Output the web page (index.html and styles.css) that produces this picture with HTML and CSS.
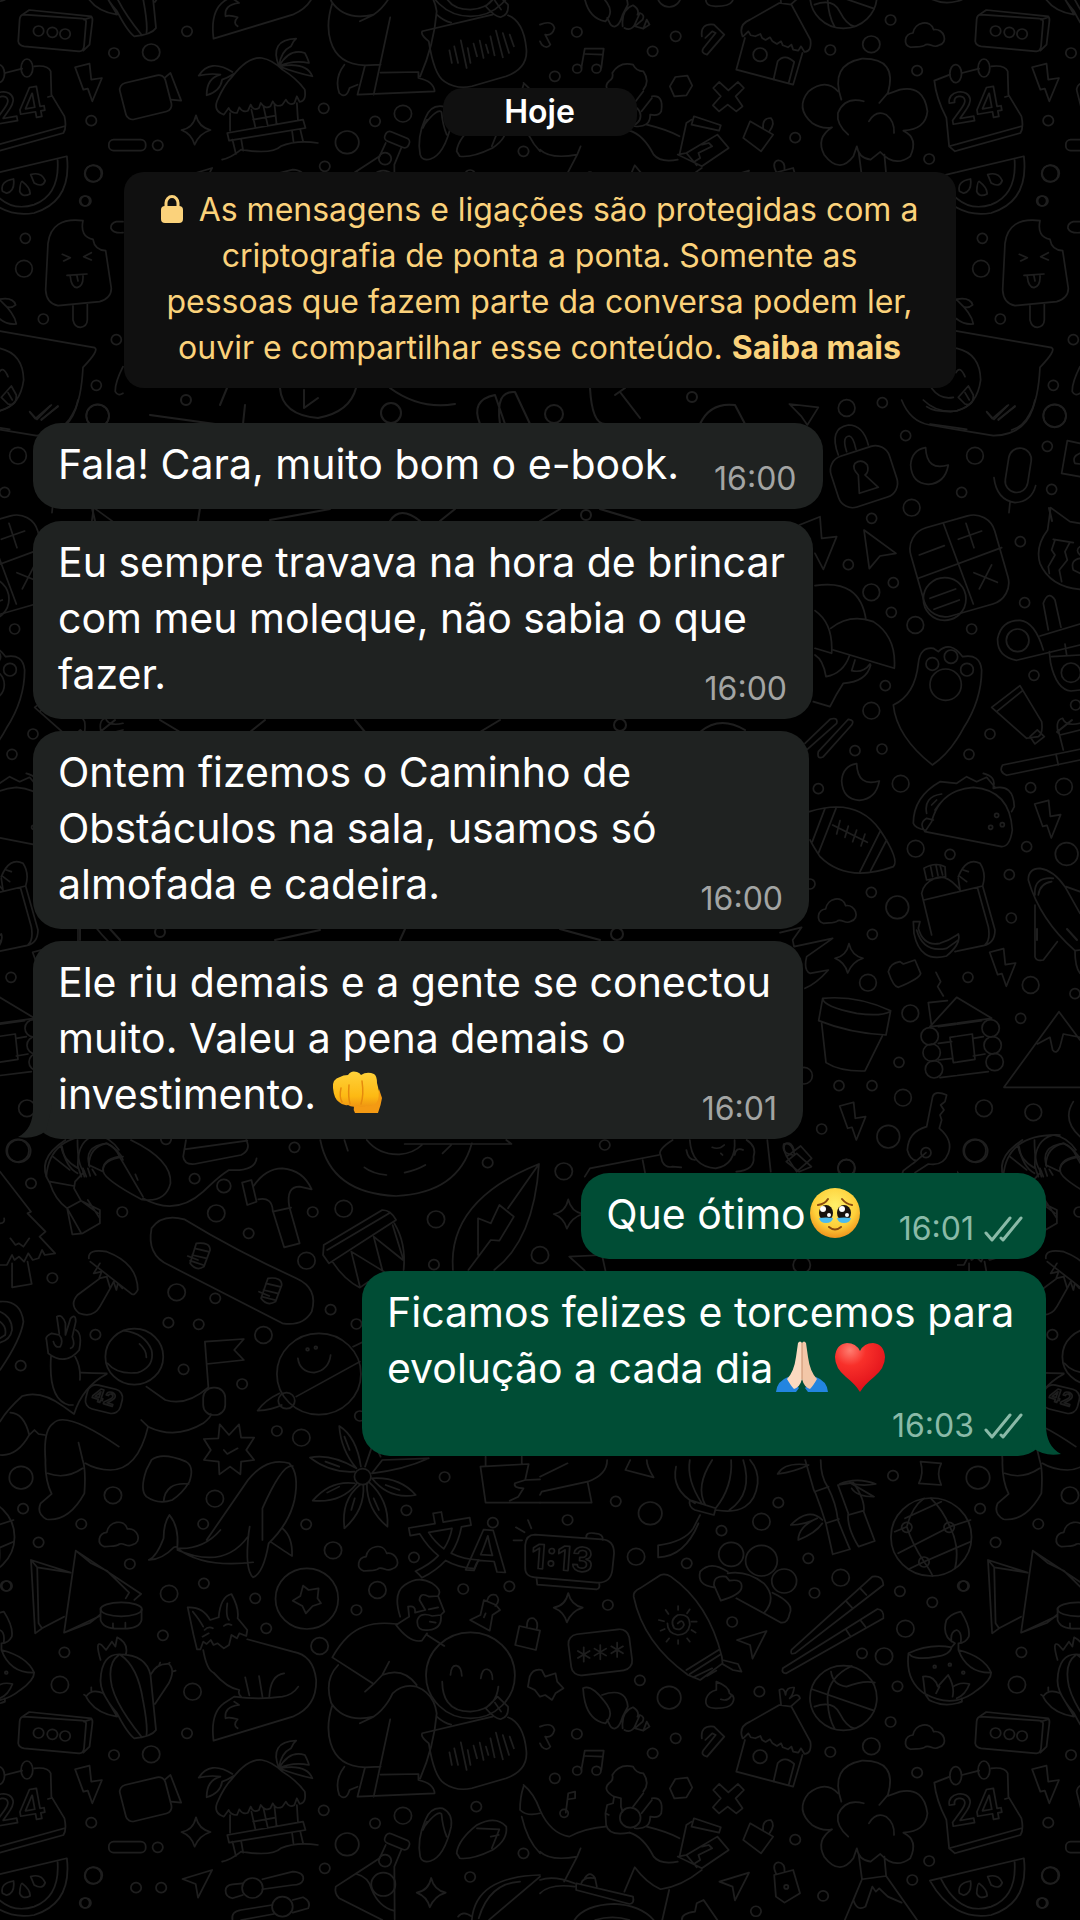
FILE: index.html
```html
<!DOCTYPE html>
<html lang="pt-BR">
<head>
<meta charset="utf-8">
<meta name="viewport" content="width=device-width, initial-scale=1">
<title>Conversa</title>
<link rel="stylesheet" href="styles.css">
</head>
<body>
<svg class="wallpaper" aria-hidden="true">
  <defs>
    <circle id="s" r="15"/>
    <circle id="m" r="25"/>
    <circle id="l" r="34"/>
    <path id="cloud" d="M-42 38C-65 30-60-2-35-5C-30-38 15-48 25-15C55-20 70 25 40 32C25 42 15 25 2 30C-10 40-25 35-42 38Z"/>
    <path id="bolt" d="M-39-45L3-56L8-8L39-13L11 57L-2 19L-15 22Z"/>
    <path id="spark" d="M0-44Q8-8 42 0Q10 10-4 44Q-12 12-42 0Q-8-6 0-44Z"/>
    <path id="arrow" d="M-44-10L42-37L1 46L-6 5Z"/>
    <g id="doodles">
      <!-- lower left -->
      <g transform="translate(0 1520) scale(.3444 .3333)">
        <use href="#s" x="236" y="12"/><use href="#s" x="590" y="12"/><use href="#s" x="889" y="13"/><use href="#s" x="1431" y="8"/><use href="#s" x="112" y="67"/><use href="#s" x="377" y="132"/><use href="#s" x="20" y="198"/><use href="#s" x="592" y="190"/><use href="#s" x="741" y="235"/><use href="#s" x="773" y="325"/><use href="#s" x="473" y="346"/><use href="#s" x="187" y="397"/><use href="#s" x="1202" y="112"/><use href="#s" x="1345" y="207"/><use href="#s" x="1479" y="199"/><use href="#s" x="1035" y="270"/><use href="#s" x="331" y="705"/><use href="#s" x="543" y="640"/><use href="#s" x="265" y="908"/><use href="#s" x="458" y="982"/><use href="#s" x="395" y="1103"/><use href="#s" x="468" y="1103"/><use href="#s" x="249" y="1149"/><use href="#s" x="940" y="871"/><use href="#s" x="1089" y="910"/><use href="#s" x="1383" y="860"/><use href="#s" x="943" y="1045"/><use href="#s" x="1365" y="1071"/><use href="#s" x="1520" y="1000"/>
        <use href="#m" x="491" y="221"/><use href="#m" x="967" y="91"/><use href="#m" x="1096" y="210"/><use href="#m" x="928" y="378"/><use href="#m" x="559" y="515"/><use href="#m" x="174" y="494"/><use href="#m" x="439" y="703"/><use href="#m" x="1170" y="887"/><use href="#m" x="272" y="1066"/><use href="#l" x="1008" y="973"/>
        <use href="#cloud" x="345" y="42"/><use href="#cloud" x="1098" y="115"/><use href="#bolt" x="257" y="793"/><use href="#spark" x="569" y="936"/><use href="#spark" x="1252" y="1118"/><use href="#arrow" x="574" y="1087"/>
        <path d="M205 158L108 142L112 310L122 325L186 290M205 158L90 120L102 340L122 325M90 120L108 142M220 92L186 338L262 308L290 285M220 92L410 222L390 240M220 92L265 130L310 152L375 218L365 235M186 338L290 288"/>
        <ellipse cx="352" cy="268" rx="60" ry="21"/><path d="M292 265V300Q300 328 350 326Q405 328 411 300V268M328 310V326M364 308V326"/>
        <path d="M292 420Q275 360 295 375L308 390L325 365L335 380L340 352Q375 370 365 405M292 480Q295 400 350 403Q425 405 437 465L453 630Q440 650 390 655Q370 640 340 580Q290 520 292 480ZM345 405Q310 430 325 500Q340 560 412 652M350 405Q400 440 415 540Q430 620 425 648M438 463Q455 430 490 432Q510 450 490 490L450 552M462 436L465 428M487 432L493 428M500 455L510 452M250 530Q265 505 300 520L340 590Q275 580 250 530M250 528L244 524M265 512V502"/>
        <path d="M572 388L562 345L545 262Q590 260 610 300L635 292Q640 230 672 222Q695 265 690 295L718 330L715 348L695 340L688 355L672 345L665 375L650 385L632 370L620 375L612 360L600 372L590 365L582 388ZM588 350L606 340M560 275Q580 300 590 320M660 250Q655 290 665 300M650 318Q660 308 672 315M594 330Q605 318 618 325M590 390Q600 450 620 458Q660 505 695 510Q690 520 700 530M718 358L850 395Q910 405 918 480Q920 560 850 590L620 662Q610 580 650 550L680 530Q750 540 820 530Q850 525 866 500M712 472L724 526M752 468L762 530M782 530Q785 465 825 460M680 545L694 555Q650 560 655 595Q665 590 690 598Q675 615 690 625"/>
        <circle cx="891" cy="236" r="91"/><path d="M880 197L896 210L925 205L922 235L932 250L908 258L888 280L878 258L850 242L872 228Z"/>
        <path d="M1162 290Q1140 220 1175 195Q1215 165 1255 190Q1285 210 1272 228L1245 230M1245 230Q1220 215 1218 240L1235 270L1205 278Q1208 255 1185 260L1188 290L1150 315M1272 228L1290 275L1280 285Q1285 325 1245 330Q1208 335 1212 300Q1220 275 1255 288L1280 285M1248 305L1265 308M1245 268L1272 262M1150 315Q1190 370 1225 362L1240 340M1150 312Q1060 300 1010 350Q985 375 965 412L1085 492L1110 465L1130 425M1240 345L1290 378M982 435Q940 480 962 550Q1000 610 1085 590Q1120 565 1140 520Q1170 490 1210 500Q1260 520 1268 580Q1260 680 1220 775M1085 492L1060 515M1110 465Q1170 440 1210 495M965 555Q945 620 960 670Q980 740 1060 742L1105 740M1045 610L1085 590M1133 598L1085 830M1000 740Q970 780 985 825Q1005 845 1015 810L1038 800M1060 742L1038 830L1262 820Q1260 790 1215 780V762L1105 764M1268 590Q1290 610 1310 614"/>
        <circle cx="1366" cy="466" r="129"/><path d="M1308 465Q1310 435 1325 437Q1340 440 1341 468M1396 475Q1400 445 1415 448Q1430 452 1430 478M1284 485Q1285 575 1366 575Q1440 570 1447 500M1410 565Q1440 600 1455 597Q1478 590 1475 560L1445 530ZM1437 548L1455 575M1226 640L1430 590M1226 640Q1220 650 1245 670Q1260 770 1290 790Q1325 815 1370 805L1470 775Q1535 750 1528 690Q1520 610 1475 592M1305 697L1312 735M1319 685L1330 735M1338 667L1355 750M1358 690L1366 735M1375 677L1385 715M1393 668L1404 720M1411 680L1418 705M1424 655L1436 712M1440 638L1460 718M1460 645L1478 705M1480 650L1492 685"/>
        <path d="M1405 240L1440 255L1452 270L1430 285L1422 332L1365 300L1395 285ZM1415 240Q1420 220 1440 225Q1455 240 1438 258M1410 280L1405 292M1508 318L1568 332L1556 390L1496 375ZM1530 320Q1530 290 1550 295Q1565 305 1558 330"/>
        <path d="M70 590Q58 590 57 605L53 670Q55 682 70 685L230 700Q242 700 244 685L250 610Q248 602 240 602ZM62 592L85 576L265 595Q270 600 268 612L260 680L242 698M244 605L265 598"/><use href="#s" x="112" y="639"/><use href="#s" x="152" y="643"/><use href="#s" x="189" y="648"/>
        <rect x="355" y="782" width="136" height="112" rx="20" transform="rotate(-14 423 838)"/><path d="M478 780L495 765L526 848L496 845"/><rect x="316" y="965" width="107" height="33" rx="14"/>
        <path d="M650 890Q620 880 630 850Q650 800 675 775Q720 715 760 720Q790 725 820 755Q860 780 885 815Q890 850 870 852L862 835L855 855Q840 865 830 845L820 860Q800 870 792 850L785 865Q770 875 757 855L752 870Q735 880 728 860L720 878Q705 885 695 868L688 885Q670 885 664 870ZM668 885V938M862 855L865 905M730 875L742 930M765 865L778 925M797 860L803 918M735 905L800 893M660 945L880 905L887 930L665 968ZM675 965L685 1008M700 962L706 998M848 938L852 970M872 935L880 970M645 1025Q670 1020 700 995Q790 1010 815 985Q860 965 923 975M810 745Q780 665 860 662Q850 670 845 685Q815 700 810 745Q840 690 885 705Q895 725 897 735Q850 725 810 745Q890 730 907 775Q860 765 810 745M675 762Q610 720 577 773Q610 765 640 770Q600 780 600 832Q640 820 645 785Q660 780 678 768"/>
        <path d="M655 1112Q655 1095 675 1093L705 1090M762 1078L850 1055Q885 1058 880 1080Q875 1095 850 1095L762 1108M705 1125L675 1135Q655 1130 655 1112M675 1200Q670 1175 700 1170L790 1155M850 1140L880 1132Q905 1145 895 1165L850 1178M700 1200L795 1182"/><circle cx="733" cy="1104" r="30"/><circle cx="820" cy="1160" r="30"/>
        <rect x="1116" y="950" width="74" height="30" rx="12" transform="rotate(23 1153 965)"/><path d="M1120 975L1102 1015L1035 1060L975 1100Q970 1120 985 1135L1110 1200M1165 990L1145 1040L1146 1198M1035 1062Q1070 1070 1080 1110Q1100 1160 1143 1172"/><circle cx="1118" cy="1022" r="18"/><circle cx="1113" cy="1093" r="35"/>
        <path d="M1220 1010Q1210 960 1235 900Q1250 860 1285 865Q1315 880 1310 920Q1290 1010 1250 1023Q1225 1030 1220 1010ZM1232 920Q1270 870 1282 882Q1285 920 1297 950M1228 930L1240 905M1326 1000Q1330 960 1385 915Q1440 885 1470 920Q1475 960 1430 990Q1370 1020 1335 1015ZM1385 925L1450 928L1428 985M1448 945L1425 950M1370 1200Q1380 1070 1568 1065M1390 1195Q1420 1090 1510 1085M1568 1070L1420 1200M1330 1190Q1345 1170 1370 1190M1520 800Q1510 830 1510 870Q1530 890 1568 880M1520 795Q1550 820 1568 870M1515 890Q1530 960 1568 1000"/>
      </g>
      <!-- lower right -->
      <g transform="translate(540 1460) scale(.3444 .3333)">
        <use href="#s" x="80" y="180"/><use href="#s" x="220" y="124"/><use href="#s" x="426" y="310"/><use href="#s" x="527" y="212"/><use href="#s" x="692" y="128"/><use href="#s" x="779" y="295"/><use href="#s" x="797" y="399"/><use href="#s" x="1025" y="47"/><use href="#s" x="1045" y="394"/><use href="#s" x="1139" y="427"/><use href="#s" x="1228" y="378"/><use href="#s" x="197" y="435"/><use href="#s" x="558" y="486"/><use href="#s" x="290" y="661"/><use href="#s" x="637" y="695"/><use href="#s" x="935" y="580"/><use href="#s" x="1038" y="679"/><use href="#s" x="1018" y="786"/><use href="#s" x="107" y="822"/><use href="#s" x="394" y="835"/><use href="#s" x="327" y="880"/><use href="#s" x="843" y="876"/><use href="#s" x="43" y="955"/><use href="#s" x="1095" y="938"/><use href="#s" x="741" y="1139"/><use href="#s" x="822" y="1308"/><use href="#s" x="1130" y="1203"/><use href="#s" x="1081" y="1260"/><use href="#s" x="627" y="1354"/>
        <use href="#m" x="279" y="290"/><use href="#m" x="643" y="185"/><use href="#m" x="873" y="353"/><use href="#m" x="1061" y="506"/><use href="#m" x="999" y="589"/><use href="#m" x="962" y="859"/><use href="#l" x="320" y="160"/><use href="#l" x="375" y="713"/>
        <use href="#cloud" x="1118" y="830"/><use href="#spark" x="82" y="443"/><use href="#arrow" x="616" y="550"/><use href="#arrow" x="565" y="1275"/>
        <path d="M-15 224L180 238Q215 240 215 280L210 330Q205 370 165 368L-15 352Q-45 350-43 320V255Q-40 224-15 224ZM-10 355L-8 374L165 388Q175 385 172 370M135 235Q130 215 160 220Q185 222 182 240M-70 202L-45 217M-77 241H-52M-35 180L-25 205"/>
        <text x="-26" y="326" font-size="100" transform="rotate(4 0 300)">1:13</text>
        <path d="M0 50L80 10M0 128H150L138 65L5 95L0 105M138 65Q195 45 195 0M395 20Q380 90 450 130M435 120Q430 140 450 150L505 165L510 145L440 122M510 150Q620 170 632 70Q635 30 610 0M435 0Q425 60 470 130M500 0Q450 80 480 135M555 0Q560 80 510 145M590 0Q620 100 550 150M465 165L445 205Q420 245 343 256V292Q420 290 460 190M248 30L330 52Q310 20 310 0M248 30L262 0"/>
        <circle cx="555" cy="283" r="36"/><circle cx="643" cy="302" r="46"/><circle cx="709" cy="363" r="36"/>
        <path d="M545 335Q495 300 465 335Q455 375 505 382M545 340Q600 330 650 370Q690 415 650 460L570 415M675 398Q740 430 725 460Q720 490 700 488L650 460M525 422L505 375Q505 345 540 350L550 362Q590 355 585 385Q580 405 525 422Z"/>
        <path d="M350 345Q365 340 380 350Q490 430 528 590L530 610L465 660L430 645Q300 550 272 410Q270 395 290 385ZM425 630L522 568M435 642L526 582M445 652L500 625M530 600L575 612L585 635L560 630L530 612M485 648L512 632"/>
        <path d="M400 490Q415 475 418 495Q410 515 390 505Q375 480 400 465Q435 460 435 495Q430 525 400 525Q370 520 370 490M401 438V450M435 448L427 460M455 485H440M452 518L440 510M435 545L427 535M401 552V540M367 545L375 535M350 512L362 507M345 480L360 484M365 450L373 462"/>
        <path d="M730 570L965 350Q995 345 997 375L740 580Q725 585 730 570ZM930 385L948 405M890 425L908 445M705 625L980 447Q1000 450 997 475L715 640Q700 640 705 625ZM930 480L945 500M888 508L902 530M690 42Q710 5 780 15Q740 35 690 42M770 0L795 90L800 100Q815 140 830 190L850 283L900 268Q880 220 865 180Q860 130 835 80Q815 50 815 0M797 95L838 80M830 190L868 177M865 75L895 160Q890 200 925 260L972 243L940 155Q945 120 910 68ZM895 165L940 152M870 72Q920 50 975 72Q930 80 900 68L970 110Q920 110 905 85M820 180Q780 140 728 195Q770 195 805 175Q750 200 750 240Q800 220 820 190M1105 5L1165 10Q1150 40 1165 75L1100 70Q1115 40 1105 5Z"/>
        <circle cx="1136" cy="231" r="117"/><path d="M1115 115Q1080 140 1065 200Q1080 250 1115 305Q1135 335 1140 348M1065 200L1030 215M1060 175L1165 125M1190 200Q1170 150 1135 115M1190 200L1250 180M1190 200Q1220 260 1205 325M1190 200L1040 280M1115 305L1250 245M1115 305L1070 328"/><use href="#s" x="1065" y="202"/><use href="#s" x="1188" y="202"/><use href="#s" x="1115" y="306"/>
        <rect x="86" y="515" width="178" height="124" rx="28" transform="rotate(-7 175 577)"/><path d="M127 562V605M110 573L144 594M144 573L110 594M175 555V598M158 566L192 587M192 566L158 587M224 548V591M207 559L241 580M241 559L207 580"/>
        <path d="M-30 650Q-20 625 5 630L15 650L45 640L50 665L68 685L45 700L35 720L15 705L0 710L-15 690L-35 680ZM125 685Q150 670 195 735Q215 765 190 790Q130 780 125 685ZM180 705Q250 680 255 740L240 770Q225 820 205 800L195 780M240 805Q235 755 270 742Q290 755 283 770M245 810Q265 820 275 800L290 765Q305 770 298 785L275 805L300 812L310 785L318 800L300 812M512 665Q550 680 550 700Q570 710 558 730Q550 745 510 745Q475 745 483 715Q490 695 512 690ZM525 718Q545 725 555 708M470 835Q465 795 505 800L535 830L485 890Q465 885 475 870L510 825L500 820L480 840M0 800Q35 785 42 810Q35 835 15 830L30 860Q20 875 5 860L0 850"/>
        <circle cx="881" cy="714" r="97"/><path d="M790 688L970 752M905 618Q840 650 835 710Q835 770 855 805M845 635Q850 675 890 680Q940 660 972 668M797 740Q850 720 870 760Q890 800 912 805"/>
        <path d="M588 835Q575 800 610 785L695 735L730 740L785 845Q790 880 768 882L758 865L750 878L735 875L730 860L720 868L705 862L700 850L688 858L675 850L668 838L655 846L645 840L640 828L625 835L612 832L605 820L590 835M595 840L570 935L735 980L762 885M678 965L690 910Q710 885 738 912L722 975M700 735L695 690Q710 680 713 705Q715 680 738 683Q735 705 725 715Q750 695 755 715L728 740"/><circle cx="639" cy="890" r="20"/>
        <path d="M1070 580Q1130 550 1195 562Q1190 585 1150 590Q1100 600 1078 588ZM1215 570Q1290 590 1310 638Q1240 640 1215 570ZM1070 580Q1060 660 1115 700Q1200 750 1270 690Q1310 660 1310 638M1195 562L1205 550Q1165 530 1180 480Q1195 460 1222 455Q1250 500 1245 530Q1235 550 1215 550V570M1195 545Q1190 515 1210 510Q1225 515 1222 545M1118 700L1112 650Q1145 645 1155 680L1185 645Q1205 680 1198 710M1150 700L1160 680M1200 680Q1220 665 1247 672Q1235 705 1210 715M1120 705L1130 720Q1175 745 1225 725V715"/><circle cx="1146" cy="620" r="4"/><circle cx="1190" cy="614" r="4"/><circle cx="1229" cy="638" r="4"/>
        <path d="M120 930L130 872H185L178 930M132 888L183 890M75 1058L82 1000L102 995V1015L82 1018"/><circle cx="108" cy="932" r="13"/><circle cx="164" cy="932" r="13"/><circle cx="70" cy="1060" r="12"/><path d="M393 957L428 953L442 983L425 1012L390 1015L377 985Z"/>
        <path d="M547 997L575 972L592 990L568 1015L588 1045L570 1060L545 1040L520 1060L502 1042L525 1015L503 990L520 972Z"/>
        <path d="M610 1090L677 1130L642 1180L590 1140ZM648 1110Q645 1080 670 1080Q685 1095 665 1122M680 1245L735 1230L755 1300L710 1328L685 1310ZM685 1240Q672 1212 692 1207Q712 1210 710 1235"/><circle cx="715" cy="1281" r="6"/>
        <path d="M215 1010Q180 990 200 970Q215 960 210 945Q230 910 270 920Q280 940 300 940Q320 970 300 995M300 1000L270 1040M325 1020L295 1060M325 1015Q360 1010 352 1060Q345 1075 320 1070Q320 1110 275 1105M215 1010L235 1015V1040L240 1055M215 1010L212 1030L195 1035L190 1060L200 1065M190 1060L192 1095Q200 1130 260 1118"/><circle cx="262" cy="1073" r="30"/>
        <path d="M0 1050Q30 1120 85 1130Q130 1105 190 1100M260 1118Q300 1130 330 1190Q350 1215 400 1205M310 1100Q370 1115 405 1135M0 1175Q30 1205 108 1190L118 1165M108 1190L70 1265M275 1222L245 1295M275 1222Q310 1270 350 1288Q410 1280 470 1230M375 1290L355 1380M405 1190L425 1095L440 1085M447 1075L525 1102L520 1118L440 1100ZM400 1190L425 1185L515 1130L548 1170L470 1225ZM425 1185L455 1222M450 1210L465 1200L460 1185L500 1165L490 1155L470 1160M0 1260Q40 1245 100 1270M0 1300Q30 1270 100 1280M105 1270L270 1310Q275 1330 260 1332L105 1290ZM120 1270Q125 1250 160 1255L165 1280M100 1380Q130 1335 215 1332Q290 1335 330 1380M160 1380Q210 1365 260 1380M130 1255Q145 1230 160 1255M412 1380Q410 1360 450 1355L455 1330L475 1320L515 1380"/>
        <path d="M875 1025Q840 920 935 902Q1040 900 1010 1005L985 1035M865 1000Q830 960 780 1000Q740 1050 790 1095Q820 1115 848 1108Q800 1140 825 1190Q870 1250 910 1195L920 1165Q925 1200 960 1205L988 1182Q1030 1230 1075 1195Q1100 1140 1055 1118Q1120 1115 1125 1060Q1115 980 1045 995L1010 1008M895 1130Q860 1100 865 1065Q885 1015 940 1030M955 1090Q975 1055 1005 1070Q1030 1090 1028 1125M925 1180L935 1258L1005 1248L1000 1190M935 1258L885 1380M1005 1248L1095 1380M930 1270L910 1320Q920 1355 945 1340L955 1310L965 1280L975 1295L985 1285L1000 1300L1010 1310L1050 1328"/>
        <path d="M1190 950L1145 968Q1150 1020 1180 1080L1188 1165L1205 1180L1395 1125Q1405 1110 1398 1075L1360 1010L1358 940Q1350 920 1310 925M1225 945L1275 932M1358 1015L1350 1017M1188 1165L1398 1105"/><ellipse cx="1207" cy="947" rx="17" ry="27"/><ellipse cx="1289" cy="930" rx="17" ry="27"/><text x="1192" y="1100" font-size="126" transform="rotate(-10 1192 1100)">24</text>
        <path d="M1132 1262L1405 1195Q1420 1330 1310 1365Q1200 1385 1132 1262ZM1165 1258Q1220 1370 1310 1340Q1385 1310 1378 1205M1218 1300Q1210 1270 1250 1263Q1255 1300 1230 1306ZM1268 1300Q1270 1270 1275 1270Q1300 1290 1298 1308Q1275 1320 1268 1300ZM1300 1250Q1330 1240 1342 1268Q1335 1290 1310 1275Z"/>
      </g>
      <!-- middle left -->
      <g transform="translate(0 1140) scale(.3444 .3333)">
        <use href="#l" x="55" y="33"/><use href="#s" x="90" y="130"/><use href="#s" x="482" y="-2"/><use href="#s" x="855" y="22"/><use href="#s" x="565" y="116"/><use href="#s" x="355" y="216"/><use href="#s" x="722" y="280"/><use href="#s" x="908" y="216"/><use href="#s" x="1416" y="68"/><use href="#s" x="1260" y="374"/><use href="#s" x="152" y="414"/><use href="#s" x="625" y="475"/><use href="#s" x="489" y="548"/><use href="#s" x="577" y="553"/><use href="#s" x="277" y="584"/><use href="#s" x="960" y="509"/><use href="#s" x="1035" y="552"/><use href="#s" x="60" y="677"/><use href="#s" x="533" y="688"/><use href="#s" x="703" y="732"/><use href="#s" x="804" y="873"/><use href="#s" x="1045" y="828"/><use href="#s" x="67" y="1106"/><use href="#s" x="1291" y="1011"/><use href="#s" x="1180" y="1111"/>
        <use href="#m" x="628" y="220"/><use href="#m" x="998" y="206"/><use href="#m" x="1266" y="238"/><use href="#m" x="890" y="362"/><use href="#m" x="513" y="457"/><use href="#m" x="765" y="585"/><use href="#m" x="875" y="893"/><use href="#m" x="624" y="1076"/><use href="#m" x="328" y="1066"/><use href="#l" x="61" y="1013"/>
        <path d="M190 0Q100 60 145 130Q160 180 195 205L210 283L240 280L290 250V210L235 182L215 145L218 125L240 100M180 20Q190 80 225 100M225 0Q225 80 245 95M145 125L215 138M195 205L235 182L285 220M195 205L235 278M255 180L290 235M240 90L245 110M255 85L262 108M268 88L278 105M258 75Q260 20 310 10Q335 20 350 55L415 170M300 95Q295 60 345 50M258 75L300 95Q305 120 410 178Q480 190 495 130Q500 60 380 0M393 103L400 120M540 0L532 50Q535 75 565 72L700 45Q730 30 715 0M535 28L718 2M415 175Q510 230 590 155Q640 105 665 90Q740 95 745 55"/>
        <circle cx="650" cy="138" r="20"/><path d="M703 128L730 120L745 185L718 195ZM735 140Q770 85 820 85Q880 90 905 148L870 140Q830 140 840 200L870 310L825 322L792 212Q790 170 750 178M792 215L845 203M440 265Q470 220 535 238Q680 330 860 415Q925 445 905 515Q880 560 820 550L490 375Q425 345 440 265ZM570 310Q610 305 610 330L592 380Q570 395 552 370ZM565 325L605 335M558 345L600 355M552 362L590 375M545 348L575 360M778 415Q818 410 818 435L800 485Q775 500 758 475ZM772 430L812 440M765 450L806 460M760 470L798 480M752 455L782 468"/>
        <path d="M0 95L90 215L80 220L132 275L115 290L160 340L130 345L122 330L112 355L95 360L82 340L70 365L55 350L42 360L35 345L20 375L0 375M35 370L35 442L92 432L80 365M30 295L45 315L55 310L68 320L85 295M0 250Q15 250 12 235M258 355Q255 325 310 335Q400 370 400 450Q390 470 380 460L262 365M290 370L272 400L295 395L288 415L310 410L320 445L330 425L338 450L342 430L355 445M290 415L225 465Q200 495 230 520Q270 535 290 500L320 445M0 485Q60 480 68 545Q60 600 0 690M0 515Q35 530 35 570Q30 600 0 608M0 545Q20 560 15 585L0 595"/>
        <path d="M940 315L1110 210Q1135 210 1150 240L955 370L938 345ZM950 330L1130 220M965 365Q1000 420 1045 443L1070 425M1145 250Q1180 310 1172 390M1020 335L1045 440M1020 335L1115 395M1085 290L1110 390M1085 290L1170 360M1140 255L1170 355M930 0Q960 160 1150 168Q1330 160 1370 10M1065 0Q1100 45 1160 43Q1200 40 1225 15M1058 82Q1080 100 1122 105M1175 98Q1210 90 1235 75M1000 0L1010 32M1175 12H1485L1470 0M1285 40L1310 15M1315 390Q1300 180 1565 72Q1550 300 1435 390M1360 390L1425 300L1450 302L1492 230L1450 195L1425 250L1388 235V345M1565 72L1475 205"/>
        <circle cx="390" cy="650" r="84"/><path d="M312 670Q340 705 400 698Q450 680 440 630Q420 580 360 572M405 612Q425 630 425 652M135 600Q130 590 150 580L172 585Q185 600 175 620Q160 625 155 605M172 580L165 530Q180 520 190 550L190 585L205 535Q220 520 220 545L210 590Q220 620 205 625M135 600L140 640Q190 680 230 630Q240 580 220 570M148 650Q140 780 200 795L212 795M218 650Q235 680 232 720M235 698Q270 700 310 700M310 702Q240 740 215 822L185 800Q120 750 65 768Q20 810 0 845M425 740L480 780Q540 800 605 742M595 605L605 742M595 605L708 597L680 630L708 660L600 672M410 840L430 860Q510 900 590 850Q615 830 612 822M430 860Q400 990 320 990Q280 990 248 970M345 920Q190 810 155 850Q125 870 132 960Q130 1020 150 1062L118 1090Q105 1120 135 1138Q200 1145 245 1060Q250 990 240 960L228 908M138 1000Q190 1020 240 985M30 818Q70 820 85 885L100 870L112 882L130 885M85 885Q50 950 0 945"/>
        <rect x="590" y="743" width="64" height="82" rx="30"/><rect x="250" y="740" width="104" height="74" rx="26" transform="rotate(14 300 777)"/><text x="265" y="790" font-size="54" transform="rotate(18 300 777)">42</text>
        <circle cx="926" cy="702" r="122"/><path d="M865 655Q870 695 912 698Q955 690 960 645M860 770L1045 665M1025 620L1055 605M812 760Q770 780 748 812Q790 810 818 795"/><circle cx="832" cy="782" r="24"/><circle cx="893" cy="628" r="4"/><circle cx="917" cy="623" r="4"/>
        <path d="M638 853L665 885L694 853L700 893L738 893L715 930L738 960L700 965L698 1003L668 980L637 1003L635 965L592 960L612 930L592 897L634 895ZM650 930L660 942L690 925"/>
        <path d="M440 960Q470 935 540 965Q565 980 550 1025Q530 1060 500 1080Q460 1095 425 1070Q405 1050 425 990ZM475 1085Q480 1025 548 1032"/>
        <path d="M1035 985Q990 930 985 858Q1035 890 1048 980M1030 995Q960 1000 900 953Q960 940 1035 985M1030 1030Q960 1020 908 1082Q990 1090 1035 1032M1045 1035Q990 1080 1000 1165Q1060 1110 1055 1035M1065 1030Q1065 1110 1125 1160Q1130 1080 1070 1025M1080 1015Q1130 1080 1207 1065Q1160 1010 1080 1015M1080 1000L1110 960L1245 955Q1170 990 1080 1000M1060 980L1085 905L1105 950M1000 890L1015 930M945 965L985 980M950 1058L985 1040M1020 1110L1030 1075M1100 1110L1085 1075M1160 1050L1120 1035"/><circle cx="1053" cy="1010" r="24"/>
        <path d="M1410 950V975M1515 950V972M1395 980L1535 972L1525 1020L1568 1018M1395 980L1410 1088H1568M1525 1020L1495 1030Q1490 1045 1520 1045L1505 1070L1480 1082"/>
        <path d="M600 1200L720 1020Q775 950 840 970Q870 1000 855 1080Q840 1150 780 1210Q765 1300 735 1312Q710 1290 722 1180L725 1160M762 1200V1105Q820 970 850 978M515 1225Q590 1230 640 1170M432 1260Q455 1250 475 1195Q475 1150 492 1125Q520 1160 515 1220L505 1222Q470 1260 432 1260M515 1225Q590 1285 735 1267M515 1230Q650 1290 720 1190M785 1205Q835 1240 848 1248Q850 1190 820 1165"/>
        <text x="1188" y="1284" font-size="196" class="cjk" transform="rotate(-10 1280 1210)">文</text><text x="1352" y="1294" font-size="170" transform="rotate(4 1410 1230)">A</text>
      </g>
      <!-- strip above the green bubbles -->
      <g transform="translate(540 1140) scale(.3444 .3333)">
        <use href="#s" x="188" y="15"/><use href="#m" x="69" y="94"/><use href="#m" x="890" y="84"/><use href="#spark" x="82" y="222"/><use href="#m" x="0" y="345"/><use href="#m" x="760" y="375"/>
        <path d="M130 110L145 85L345 45M298 60L305 98M350 45L355 65Q365 85 385 80L410 82M385 0Q340 30 350 45M435 0Q440 80 510 85Q570 75 565 0M425 30Q430 60 450 60M500 22Q520 30 535 15M525 40L530 45M590 30Q570 20 565 45M600 0Q630 20 620 50Q625 90 570 95M660 0L670 95M745 40L788 80L752 95L715 65ZM735 45Q700 40 708 12Q730 5 738 40M85 350L180 345L190 392M85 350L130 392"/>
      </g>
      <!-- right column, upper -->
      <g transform="translate(780 400) scale(.3333)">
        <use href="#m" x="200" y="24"/><use href="#s" x="307" y="8"/><use href="#s" x="377" y="107"/><use href="#m" x="585" y="167"/><use href="#l" x="824" y="48"/><use href="#s" x="802" y="139"/><use href="#s" x="815" y="268"/><use href="#s" x="545" y="277"/><use href="#m" x="395" y="323"/><use href="#s" x="275" y="355"/><use href="#s" x="205" y="494"/><use href="#s" x="340" y="548"/><use href="#m" x="274" y="577"/><use href="#s" x="334" y="637"/><use href="#m" x="406" y="675"/><use href="#s" x="575" y="687"/><use href="#s" x="721" y="425"/><use href="#s" x="734" y="608"/><use href="#s" x="762" y="826"/><use href="#s" x="316" y="857"/><use href="#m" x="274" y="932"/><use href="#s" x="630" y="1002"/><use href="#s" x="567" y="1063"/><use href="#s" x="306" y="1047"/><use href="#s" x="225" y="1052"/><use href="#s" x="115" y="1166"/><use href="#m" x="362" y="1151"/><use href="#s" x="752" y="1163"/><use href="#m" x="852" y="1160"/><use href="#s" x="887" y="915"/>
        <path d="M28 12L115 22L82 75L65 50ZM365 0Q390 65 450 75L640 107Q745 105 765 0M430 0Q470 40 530 33Q570 20 580 0M622 38L642 58L685 15M655 60L705 18"/>
        <rect x="160" y="150" width="184" height="160" rx="44" transform="rotate(-18 252 230)"/><path d="M175 165Q145 85 205 75Q250 75 265 135M200 155Q185 110 208 108Q220 110 228 148M235 225Q215 205 225 190Q245 175 262 195Q268 215 255 225L295 262L238 280Z"/>
        <path id="moon" d="M437 143Q395 150 392 195Q395 250 445 253Q495 250 505 195Q440 215 437 143Z"/><rect x="681" y="144" width="68" height="134" rx="34" transform="rotate(9 715 210)"/><path d="M642 233Q650 300 705 308Q755 305 767 257M690 308L687 338M900 130L862 122L845 220L900 230M900 160Q875 170 885 190L900 192M58 375L120 350L125 415L170 410L130 508L105 460M252 390L348 460L300 468L268 506Z"/>
        <rect x="405" y="360" width="262" height="275" rx="66" transform="rotate(-16 538 490)"/><path d="M490 370L580 612M415 535L665 443M418 465L493 437M535 418L605 393M558 370L582 443M582 518L652 547M635 495L598 567M450 595L527 567M462 628L538 600"/><circle cx="494" cy="597" r="64"/>
        <path d="M900 370L870 365L812 323L803 390Q765 440 780 490Q810 560 900 568M820 418L880 428M825 420L815 450L825 465L805 500L808 520M868 430L855 455L862 480L838 510L845 545M900 440Q885 450 900 465M900 475Q870 480 880 510L900 520M105 557Q240 535 258 660M105 632Q160 670 155 760L105 745M152 685Q210 640 280 665Q350 710 343 805L160 750M105 765Q130 780 138 830Q190 820 208 768M225 780L215 812Q250 820 270 792M272 795Q260 845 190 850Q170 880 150 920L100 905"/>
        <path d="M340 915Q405 885 415 790Q420 740 460 745L475 755Q510 720 548 770Q600 760 605 810Q605 900 550 985Q510 1060 457 1095Q350 1010 340 915Z"/><circle cx="497" cy="854" r="47"/><circle cx="457" cy="792" r="19"/><circle cx="513" cy="770" r="20"/><circle cx="561" cy="809" r="19"/>
        <circle cx="713" cy="721" r="34"/><circle cx="873" cy="818" r="29"/><path d="M900 735L710 781Q650 770 653 715Q665 660 720 661Q765 665 790 750M780 708L900 672M805 690L790 610Q805 570 825 600L843 682M808 755L812 790Q830 870 873 873L900 870M815 770L900 765M855 732L860 765M635 922L720 857L785 965Q790 1000 775 1010L740 1015ZM650 935L728 872M750 1010L772 990L793 1010L765 1032ZM900 1048L668 1095Q655 1115 680 1126L900 1080M828 1062L835 1095M835 1000Q825 960 848 955Q855 980 900 970M840 1005L900 990M835 990L850 1050M75 1030L150 958Q175 950 170 970L80 1050M115 1055L205 958Q225 960 215 975L130 1070Q110 1080 115 1055Z"/>
        <use href="#moon" x="-207" y="948"/>
      </g>
      <!-- right column, lower -->
      <g transform="translate(780 780) scale(.3333)">
        <use href="#s" x="740" y="200"/><use href="#s" x="510" y="223"/><use href="#m" x="407" y="206"/><use href="#l" x="860" y="222"/><use href="#s" x="688" y="284"/><use href="#s" x="274" y="337"/><use href="#l" x="352" y="382"/><use href="#s" x="694" y="414"/><use href="#s" x="277" y="463"/><use href="#s" x="564" y="592"/><use href="#m" x="264" y="608"/><use href="#m" x="752" y="615"/><use href="#s" x="885" y="641"/><use href="#s" x="722" y="715"/><use href="#m" x="391" y="700"/><use href="#s" x="357" y="847"/><use href="#s" x="177" y="917"/><use href="#s" x="276" y="917"/><use href="#m" x="369" y="953"/><use href="#m" x="612" y="985"/><use href="#m" x="760" y="997"/><use href="#s" x="125" y="1047"/><use href="#l" x="325" y="1070"/><use href="#l" x="584" y="1112"/><use href="#m" x="199" y="1163"/><use href="#m" x="72" y="887"/><use href="#s" x="90" y="312"/>
        <use href="#cloud" x="172" y="392"/><use href="#spark" x="207" y="535"/><use href="#bolt" x="803" y="117"/><use href="#bolt" x="668" y="562"/><use href="#bolt" x="218" y="1023"/>
        <path d="M88 95Q230 50 300 150Q360 240 340 260Q200 310 120 230Q100 200 90 180M135 85L97 185M168 85L115 220M300 155L240 275M320 180L272 272M158 135L262 187M180 122L170 162M205 138L195 172M230 150L218 185M255 162L243 198"/>
        <path d="M400 130Q400 50 480 5L530 10L560-10L590 5L620-8L645 22M435 150Q405 145 400 130M435 155L455 125Q480 30 580 22Q690 30 697 150Q690 200 665 200ZM435 155Q415 130 440 115L460 120M485 42Q430 50 440 100M470 60L455 75M480 70L465 90M640 25Q700 10 703 80L695 95M640 22Q650 -10 610-20"/><circle cx="650" cy="106" r="6"/><circle cx="667" cy="134" r="6"/><circle cx="632" cy="142" r="6"/>
        <path d="M425 340Q430 310 465 295Q500 280 540 330M425 340L455 465M432 360L608 318M608 318L645 450Q645 490 610 497L525 515M592 322L625 440Q632 480 615 495M535 290Q560 230 600 250Q620 280 608 318M540 330L535 295M550 270L565 275M540 290L560 305M440 300L432 265Q465 245 495 260L497 290ZM452 260L458 290M468 256L474 286M480 255L488 285M400 425H420L415 445Q430 500 480 490Q510 480 535 462Q545 490 500 528Q420 550 402 460ZM410 450Q430 520 500 505L535 480"/>
        <path d="M325 575Q330 550 360 545L370 552L405 540L422 580Q420 595 355 622Q340 620 325 575ZM468 577L482 605L473 620L490 648M128 655Q230 645 332 692L318 765Q210 760 116 722ZM128 655Q130 680 230 700Q300 710 330 695M125 730L138 848Q180 875 255 873L307 768"/>
        <path d="M450 740L530 652L635 715L455 740L445 668L502 662M475 740L605 722M475 790L515 785M580 775L610 770M475 840L518 835M580 828L615 822M480 893L625 875M510 772L577 762L585 838L520 848Z"/><circle cx="449" cy="769" r="26"/><circle cx="455" cy="818" r="26"/><circle cx="462" cy="868" r="26"/><circle cx="632" cy="745" r="26"/><circle cx="638" cy="796" r="26"/><circle cx="644" cy="846" r="26"/>
        <path d="M900 780L837 695L672 922H900M772 792L810 772L818 810Q830 825 840 800L850 762L900 772M900 510L885 512Q780 420 745 300Q745 265 780 265Q820 270 855 320L900 400M858 320L900 335M765 345Q760 290 820 295M775 345Q780 310 815 305M765 375V530Q770 545 790 540L832 485M885 512Q885 560 900 580M880 965Q845 1020 900 1070M0 458L65 442L38 480L42 500L158 475L80 530Q70 570 90 580L145 570Q110 610 75 625"/>
        <path d="M440 1040L458 950Q465 930 500 945L495 965L482 975L492 990L480 1005L485 1020L478 1045Q520 1080 505 1120Q490 1160 445 1152L405 1178M440 1040Q385 1055 382 1110Q390 1140 410 1142L370 1172L360 1200M438 1118L400 1150"/><circle cx="438" cy="1118" r="15"/>
        <path d="M20 1130L62 1098L95 1135L50 1175ZM20 1130Q5 1100 18 1090Q35 1085 42 1110M670 1190Q680 1060 840 1065M690 1130L740 1170M715 1100Q720 1140 765 1165M765 1165Q760 1080 820 1065Q860 1070 888 1110M800 1160Q780 1100 850 1090Q890 1110 900 1140M765 1160L775 1190M780 1165L790 1190M840 1170Q840 1140 900 1130"/>
      </g>
      <!-- right column, top -->
      <g transform="translate(930 150) scale(.3333)">
        <use href="#m" x="360" y="71"/><use href="#s" x="335" y="153"/><use href="#s" x="157" y="265"/><use href="#m" x="153" y="356"/><use href="#s" x="211" y="507"/><use href="#s" x="430" y="569"/><use href="#s" x="370" y="706"/><use href="#l" x="374" y="797"/>
        <path d="M330 212Q235 200 225 280L218 420Q220 460 255 467L380 455Q415 445 415 415L398 302Q365 300 360 268Q320 260 330 212ZM268 313L292 323L272 333M355 308L332 320L355 330M282 376L342 372M292 380Q295 412 312 413Q332 408 330 376M312 378L315 393M300 467V510Q305 532 322 532Q342 530 343 510V462M450 215H430Q412 220 414 235Q420 250 450 248M78 448Q120 440 128 465Q110 480 95 465M78 448Q125 490 130 522Q100 525 78 505M60 540L365 593Q380 600 330 652Q325 750 300 790Q280 830 245 840M60 592Q150 600 152 690Q140 780 60 785Q10 785-10 770M5 715Q30 750 70 742M78 668Q90 645 105 680M85 742L115 708L130 735Q130 770 105 762ZM105 728L118 750M170 785L187 806L232 767M205 808L255 770M450 650Q425 700 427 725Q435 740 450 730M0 822L110 838"/>
      </g>
      <!-- slivers between the grey bubbles -->
      <g class="fine"><path d="M220 405L227 388M245 405L243 424M280 388Q282 415 318 418Q350 412 356 388M304 390V408L318 398M480 424Q470 400 495 395L505 424M500 424Q495 390 515 392L530 424M590 388Q592 424 605 424M615 395L625 388M620 392L640 418M700 424Q710 402 735 405L745 424M150 415L215 424M390 388Q420 410 455 404M92 508L95 521M200 508L198 521M270 520L330 509M390 521Q400 505 420 521M440 521L455 509M540 521L560 509M600 509L640 521M100 732L115 720M160 720L180 732M250 732L265 720M355 720L365 732M480 732L500 720M700 732Q720 715 745 730M80 929V940M110 929L120 940M275 940L320 930M400 940L405 929M560 929L600 940"/><circle cx="391" cy="413" r="10"/><circle cx="186" cy="400" r="5"/><circle cx="692" cy="397" r="5"/><circle cx="554" cy="414" r="9"/><circle cx="586" cy="515" r="5"/><circle cx="620" cy="725" r="6"/><circle cx="617" cy="934" r="6"/><circle cx="160" cy="932" r="5"/></g>
    </g>
    <pattern id="tile" width="957" height="1702" patternUnits="userSpaceOnUse">
      <use href="#doodles"/><use href="#doodles" x="-957"/><use href="#doodles" y="-1702"/><use href="#doodles" x="-957" y="-1702"/>
    </pattern>
  </defs>
  <rect width="100%" height="100%" fill="url(#tile)" stroke="none"/>
</svg>

<svg class="defs" aria-hidden="true">
  <defs>
    <symbol id="ticks" viewBox="0 0 39 26"><path d="M2 17L8 24L26 2M17 22L19 24L37 2" fill="none" stroke="currentColor" stroke-width="3" stroke-linecap="round" stroke-linejoin="round"/></symbol>
  </defs>
</svg>

<main class="chat">
  <time class="day">Hoje</time>

  <p class="notice"><svg class="lock" viewBox="0 0 22 28" role="img" aria-label="Cadeado"><path d="M5 12V8a6 6.500 0 0 1 12 0v4" fill="none" stroke="currentColor" stroke-width="3"/><rect y="11" width="22" height="17" rx="4" fill="currentColor"/></svg>As mensagens e ligações são protegidas com a criptografia de ponta a ponta. Somente as pessoas que fazem parte da conversa podem ler, ouvir e compartilhar esse conteúdo. <a href="#saiba-mais">Saiba mais</a></p>

  <article class="bubble">
    Fala! Cara, muito bom o e-book.
    <span class="meta"><time>16:00</time></span>
  </article>
  <article class="bubble bubble--wide">
    Eu sempre travava na hora de brincar com meu moleque, não sabia o que fazer.
    <span class="meta"><time>16:00</time></span>
  </article>
  <article class="bubble bubble--medium">
    Ontem fizemos o Caminho de Obstáculos na sala, usamos só almofada e cadeira.
    <span class="meta"><time>16:00</time></span>
  </article>
  <article class="bubble bubble--narrow">
    Ele riu demais e a gente se conectou muito. Valeu a pena demais o investimento. <svg class="emoji" viewBox="0 0 52 52" role="img" aria-label="Punho fechado">
      <defs><linearGradient id="fist" x2="0" y2="1"><stop stop-color="#ffd23a"/><stop offset=".7" stop-color="#fdb913"/><stop offset="1" stop-color="#ef9412"/></linearGradient></defs>
      <path d="M23 39L42 34L48 22L51 31Q50 38 47 46L24 46Q22 43 23 39Z" fill="#f49a13"/>
      <path d="M2 21Q1 12 9 10Q12 8 17 8Q20 3 26 5Q29 6 30 8Q36 4 43 7Q46 9 46 16Q49 26 47 33Q44 40 35 39Q31 41 27 39Q21 41 17 38Q12 39 8 35Q3 32 2 21Z" fill="url(#fist)"/>
      <path d="M10 21Q8 30 11 35M18 18Q17 30 19 37M31 14Q33 28 30 37" fill="none" stroke="#e68a0d" stroke-width="1.500" stroke-linecap="round"/>
    </svg>
    <span class="meta"><time>16:01</time></span>
    <svg class="tail" viewBox="0 0 34 34" aria-hidden="true"><path d="M15 0Q16 24 0 32Q16 35 28 26L34 0Z" fill="currentColor"/></svg>
  </article>

  <article class="bubble bubble--sent bubble--first">
    Que ótimo<svg class="emoji" viewBox="0 0 52 52" role="img" aria-label="Rosto segurando as lágrimas">
      <defs><radialGradient id="face" cy=".35" r=".65"><stop stop-color="#fff06a"/><stop offset=".65" stop-color="#fed03a"/><stop offset="1" stop-color="#ef941c"/></radialGradient></defs>
      <circle cx="26" cy="26" r="25" fill="url(#face)"/>
      <path d="M9 18Q16 17 19 12M33 12Q37 17 43 18M20 40Q26 45 32 40" fill="none" stroke="#8a4b10" stroke-width="2" stroke-linecap="round"/>
      <ellipse cx="17" cy="26" rx="7" ry="8" fill="#17120f"/><ellipse cx="35" cy="26" rx="7" ry="8" fill="#17120f"/>
      <circle cx="14" cy="22" r="3" fill="#fff"/><circle cx="33" cy="22" r="3" fill="#fff"/><circle cx="20" cy="28" r="2" fill="#fff"/><circle cx="38" cy="28" r="2" fill="#fff"/>
      <path d="M10 31Q17 30 24 31Q23 36 17 36Q11 36 10 31ZM28 31Q35 30 42 31Q41 36 35 36Q29 36 28 31Z" fill="#4bbcf0"/>
    </svg>
    <span class="meta"><time>16:01</time><svg class="ticks" role="img" aria-label="Entregue"><use href="#ticks"/></svg></span>
  </article>
  <article class="bubble bubble--sent bubble--stacked">
    Ficamos felizes e torcemos para evolução a cada dia<svg class="emoji" viewBox="0 0 52 52" role="img" aria-label="Mãos em prece">
      <path d="M0 51Q1 40 12 36L23 47L20 51Z" fill="#2385e0"/><path d="M52 51Q51 40 40 36L29 47L32 51Z" fill="#2385e0"/>
      <path d="M11 38Q18 31 20 16L22 2Q24-1 26 2V38Q24 46 18 48Q15 45 11 38Z" fill="#fbdac0"/><path d="M41 38Q34 31 32 16L30 2Q28-1 26 2V38Q28 46 34 48Q37 45 41 38Z" fill="#f3c7a8"/>
      <path d="M26 2V38" stroke="#c98f6c" stroke-width="1" fill="none"/>
    </svg><svg class="emoji" viewBox="0 0 52 52" role="img" aria-label="Coração vermelho">
      <defs><radialGradient id="heart" cx=".3" cy=".15" r=".9"><stop stop-color="#ff7d70"/><stop offset=".35" stop-color="#f8302a"/><stop offset="1" stop-color="#dd0d18"/></radialGradient></defs>
      <path d="M26 51Q22 44 12 36Q1 27 1 16Q2 3 13 2Q22 2 26 10Q30 2 39 2Q50 3 51 16Q51 27 40 36Q30 44 26 51Z" fill="url(#heart)"/>
    </svg>
    <span class="meta"><time>16:03</time><svg class="ticks" role="img" aria-label="Entregue"><use href="#ticks"/></svg></span>
    <svg class="tail" viewBox="0 0 34 34" aria-hidden="true"><path d="M15 0Q16 24 0 32Q16 35 28 26L34 0Z" fill="currentColor"/></svg>
  </article>
</main>
</body>
</html>
```
FILE: styles.css
```css
* {
  box-sizing: border-box;
}

body {
  position: relative;
  min-height: 100vh;
  margin: 0;
  background: #000;
  color: #fff;
  font-family: Inter, "Liberation Sans", sans-serif;
}

/* Wallpaper lies under the whole conversation */
.wallpaper {
  position: absolute;
  inset: 0;
  z-index: -1;
  width: 100%;
  height: 100%;
  fill: none;
  stroke: #1e1e1e;
  stroke-width: 5px;
  stroke-linecap: round;
  stroke-linejoin: round;
  font-weight: 600;
}

.wallpaper .fine {
  stroke-width: 2px;
}

.wallpaper .cjk {
  font-family: "Noto Sans CJK JP", sans-serif;
}

.defs {
  display: none;
}

.chat {
  display: flex;
  flex-direction: column;
  align-items: flex-start;
  gap: 12px;
  padding: 88px 34px 32px 33px;
}

.day {
  align-self: center;
  width: 194px;
  margin-bottom: 24px;
  border-radius: 20px;
  background: #101010;
  font-size: 32px;
  font-weight: 600;
  line-height: 48px;
  text-align: center;
}

.notice {
  align-self: center;
  width: 832px;
  max-width: 100%;
  margin: 0 0 23px;
  padding: 15px 34px 17px;
  border-radius: 20px;
  background: #101010;
  color: #fbd27b;
  font-size: 32px;
  line-height: 46px;
  text-align: center;
}

.notice a {
  color: inherit;
  font-weight: 700;
  text-decoration: none;
}

.lock {
  width: 22px;
  height: 28px;
  margin-right: 16px;
  vertical-align: -2px;
}

.bubble {
  position: relative;
  display: flow-root;
  max-width: 100%;
  padding: 13px 26px 17px 25px;
  border-radius: 28px;
  background: #1f2221;
  font-size: 41px;
  line-height: 56px;
}

/* The time shares the last line with the text when there is room for it */
.meta {
  display: flex;
  float: right;
  align-items: center;
  gap: 10px;
  height: 40px;
  margin: 23px 0 -7px 35px;
  color: #a3a5a4;
  font-size: 32px;
  line-height: 40px;
}

.bubble--wide {
  width: 780px;
}

.bubble--medium {
  width: 776px;
}

.bubble--narrow {
  width: 770px;
}

.bubble--sent {
  align-self: flex-end;
  padding-right: 23px;
  background: #004d35;
}

.bubble--sent .meta {
  color: #8abaa8;
}

.bubble--first {
  margin-top: 22px;
}

.bubble--stacked {
  width: 684px;
}

.bubble--stacked .meta {
  margin-top: 10px;
}

.emoji {
  width: 52px;
  height: 52px;
  margin: 0 3px;
  vertical-align: -10px;
}

.ticks {
  width: 39px;
  height: 26px;
}

.tail {
  position: absolute;
  bottom: 0;
  left: -15px;
  width: 34px;
  height: 34px;
  color: #1f2221;
}

.bubble--sent .tail {
  right: -15px;
  left: auto;
  color: #004d35;
  transform: scaleX(-1);
}
```
